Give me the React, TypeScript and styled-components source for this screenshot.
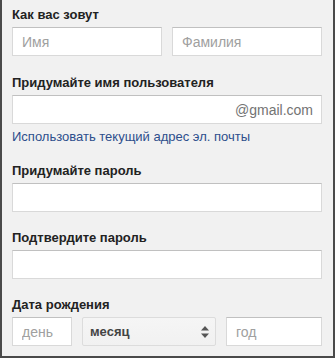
import React from "react";
import styled, { createGlobalStyle } from "styled-components";

const GlobalStyle = createGlobalStyle`
  * {
    box-sizing: border-box;
  }
  html, body {
    margin: 0;
    padding: 0;
    background: #f1f1f1;
  }
`;

const Panel = styled.form`
  width: 335px;
  height: 358px;
  padding: 7px 11px 0 10px;
  background: #f1f1f1;
  border-left: 2px solid #4a4a4a;
  border-right: 2px solid #4a4a4a;
  border-bottom: 2px solid #4a4a4a;
  font-family: "Liberation Sans", Arial, sans-serif;
  font-size: 13px;
  color: #222;
`;

const Field = styled.div<{ $top?: number }>`
  margin-top: ${(p) => p.$top ?? 0}px;
`;

const Label = styled.div`
  font-weight: bold;
  font-size: 13px;
  line-height: 16px;
  margin-bottom: 4px;
  color: #222;
`;

const Row = styled.div<{ $cols: string; $gap: number }>`
  display: grid;
  grid-template-columns: ${(p) => p.$cols};
  column-gap: ${(p) => p.$gap}px;
`;

const Box = styled.div`
  height: 29px;
  background: #fff;
  border: 1px solid #d9d9d9;
  border-top-color: #c0c0c0;
  padding: 0 8px 0 9px;
  display: flex;
  align-items: center;
`;

const Input = styled.input`
  flex: 1;
  min-width: 0;
  border: none;
  outline: none;
  padding: 0;
  background: transparent;
  font-family: "Liberation Sans", Arial, sans-serif;
  font-size: 14px;
  color: #222;
  &::placeholder {
    color: #a0a0a0;
  }
`;

const Suffix = styled.span`
  font-size: 14px;
  color: #737373;
`;

const Link = styled.a`
  display: block;
  margin-top: 5px;
  line-height: 16px;
  font-size: 13px;
  color: #2d4e8c;
  text-decoration: none;
`;

const Select = styled.div`
  height: 29px;
  border: 1px solid #dcdcdc;
  border-radius: 2px;
  background: linear-gradient(#f5f5f5, #f1f1f1);
  padding: 0 6px 0 7px;
  display: flex;
  align-items: center;
  justify-content: space-between;
  font-weight: bold;
  font-size: 13px;
  color: #444;
`;

const Arrows = () => (
  <svg width="8" height="12" viewBox="0 0 8 12">
    <path d="M4 0 L8 4.5 H0 Z" fill="#555" />
    <path d="M0 7.5 H8 L4 12 Z" fill="#555" />
  </svg>
);

export default function App() {
  return (
    <>
      <GlobalStyle />
      <Panel onSubmit={(e) => e.preventDefault()}>
        <Field>
          <Label>Как вас зовут</Label>
          <Row $cols="150px 150px" $gap={10}>
            <Box>
              <Input placeholder="Имя" />
            </Box>
            <Box>
              <Input placeholder="Фамилия" />
            </Box>
          </Row>
        </Field>

        <Field $top={19}>
          <Label>Придумайте имя пользователя</Label>
          <Box>
            <Input />
            <Suffix>@gmail.com</Suffix>
          </Box>
          <Link href="#">Использовать текущий адрес эл. почты</Link>
        </Field>

        <Field $top={18}>
          <Label>Придумайте пароль</Label>
          <Box>
            <Input type="password" />
          </Box>
        </Field>

        <Field $top={18}>
          <Label>Подтвердите пароль</Label>
          <Box>
            <Input type="password" />
          </Box>
        </Field>

        <Field $top={18}>
          <Label>Дата рождения</Label>
          <Row $cols="60px 134px 96px" $gap={10}>
            <Box>
              <Input placeholder="день" />
            </Box>
            <Select>
              <span>месяц</span>
              <Arrows />
            </Select>
            <Box>
              <Input placeholder="год" />
            </Box>
          </Row>
        </Field>
      </Panel>
    </>
  );
}
